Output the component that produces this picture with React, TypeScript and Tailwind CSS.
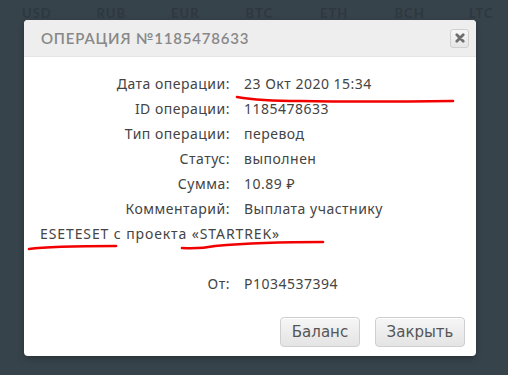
const currencies = ["USD", "RUB", "EUR", "BTC", "ETH", "BCH", "LTC"];

const rows: { label: string; value: string }[] = [
  { label: "Дата операции:", value: "23 Окт 2020 15:34" },
  { label: "ID операции:", value: "1185478633" },
  { label: "Тип операции:", value: "перевод" },
  { label: "Статус:", value: "выполнен" },
  { label: "Сумма:", value: "10.89 ₽" },
  { label: "Комментарий:", value: "Выплата участнику" },
];

function Row({ label, value }: { label: string; value: string }) {
  return (
    <div className="flex h-[25px] items-center">
      <span className="w-[220px] shrink-0 pr-[14px] text-right">{label}</span>
      <span>{value}</span>
    </div>
  );
}

function ModalButton({ children, className }: { children: string; className: string }) {
  return (
    <button
      className={
        "h-[30px] rounded-[4px] border border-[#cfcfcf] bg-gradient-to-b from-[#f6f6f6] to-[#e4e4e4] text-[15px] text-[#555] shadow-[inset_0_1px_0_#fff] " +
        className
      }
      style={{ fontFamily: '"DejaVu Sans", Verdana, sans-serif' }}
    >
      {children}
    </button>
  );
}

export default function App() {
  return (
    <div className="relative h-[375px] w-[508px] overflow-hidden bg-[#37434b]">
      <div
        className="flex h-[20px] items-end pl-[22px] text-[13px] font-bold tracking-[1px] text-[#2d383f]"
        style={{ fontFamily: "Lato, sans-serif" }}
      >
        {currencies.map((c) => (
          <span key={c} className="w-[74.5px] shrink-0 leading-[13px]">
            {c}
          </span>
        ))}
      </div>

      <div className="mx-[24px] w-[452px] overflow-hidden rounded-[4px] bg-white shadow-[0_2px_6px_rgba(0,0,0,0.3)]">
        <div className="flex h-[37px] items-center justify-between border-b border-[#e5e5e5] bg-[#eeeeee] pl-[17px] pr-[7px]">
          <span
            className="text-[15px] font-semibold tracking-[0.8px] text-[#888]"
            style={{ fontFamily: "Lato, sans-serif" }}
          >
            ОПЕРАЦИЯ №1185478633
          </span>
          <button className="flex h-[19px] w-[19px] items-center justify-center rounded-[3px] border border-[#d0d0d0] bg-gradient-to-b from-[#f7f7f7] to-[#e6e6e6]">
            <svg width="10" height="10" viewBox="0 0 10 10">
              <path d="M1.8 1.8 L8.2 8.2 M8.2 1.8 L1.8 8.2" stroke="#6f6f6f" strokeWidth="2.8" strokeLinecap="round" />
            </svg>
          </button>
        </div>

        <div
          className="pt-[14px] text-[14px] tracking-[0.5px] text-[#444]"
          style={{ fontFamily: '"Noto Sans", sans-serif' }}
        >
          {rows.map((r) => (
            <Row key={r.label} label={r.label} value={r.value} />
          ))}
          <div className="flex h-[25px] items-center pl-[16px] tracking-[0.9px]">ESETESET с проекта «STARTREK»</div>
          <div className="h-[25px]" />
          <Row label="От:" value="P1034537394" />

          <div className="flex justify-end gap-[15px] pb-[9px] pr-[11px] pt-[21px] tracking-normal">
            <ModalButton className="w-[80px]">Баланс</ModalButton>
            <ModalButton className="w-[90px]">Закрыть</ModalButton>
          </div>
        </div>
      </div>

      <svg className="pointer-events-none absolute left-0 top-0" width="508" height="375">
        <g fill="none" stroke="#f20000" strokeWidth="2.6" strokeLinecap="round">
          <path d="M237 97 Q260 101 300 101 Q360 102 453 101" />
          <path d="M29 249 Q50 246 116 246" />
          <path d="M182 248 Q200 249 215 246 Q260 242 323 242" />
        </g>
      </svg>
    </div>
  );
}
